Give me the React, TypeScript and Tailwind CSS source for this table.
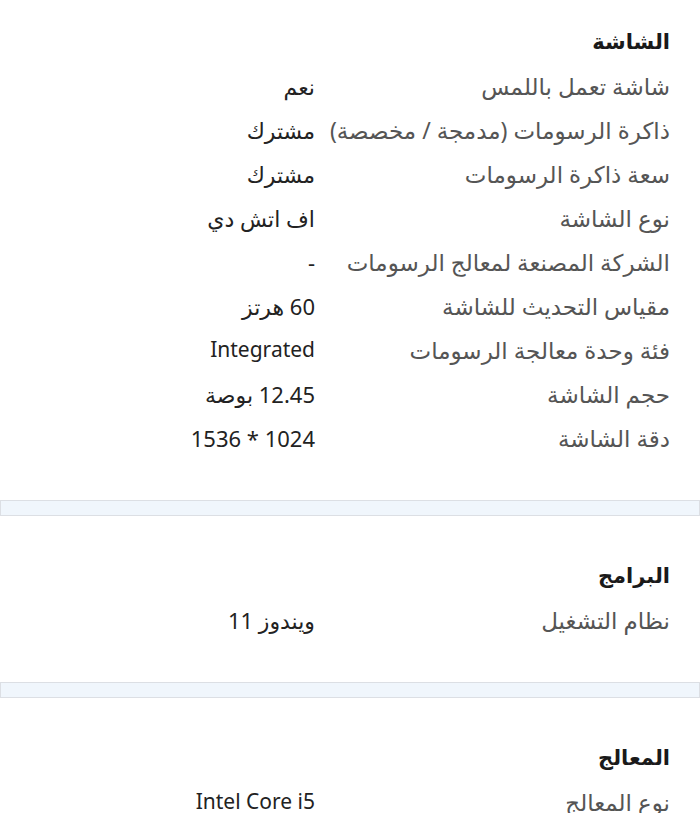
const sections = [
  {
    title: "الشاشة",
    rows: [
      ["شاشة تعمل باللمس", "نعم"],
      ["ذاكرة الرسومات (مدمجة / مخصصة)", "مشترك"],
      ["سعة ذاكرة الرسومات", "مشترك"],
      ["نوع الشاشة", "اف اتش دي"],
      ["الشركة المصنعة لمعالج الرسومات", "-"],
      ["مقياس التحديث للشاشة", "60 هرتز"],
      ["فئة وحدة معالجة الرسومات", "Integrated"],
      ["حجم الشاشة", "12.45 بوصة"],
      ["دقة الشاشة", "1024 * 1536"],
    ],
  },
  {
    title: "البرامج",
    rows: [["نظام التشغيل", "ويندوز 11"]],
  },
  {
    title: "المعالج",
    rows: [["نوع المعالج", "Intel Core i5"]],
  },
]

// latin-only values render a bit smaller than the arabic ones
const isLatin = (s: string) => /^[A-Za-z0-9 ]+$/.test(s) && /[A-Za-z]/.test(s)

function Separator() {
  return <div className="h-4 w-full border border-[#dcdfe4] bg-[#f0f6fc]" />
}

export default function App() {
  return (
    <div
      dir="rtl"
      className="h-[813px] w-[700px] overflow-hidden bg-white"
      style={{ fontFamily: '"Noto Sans", "DejaVu Sans", sans-serif' }}
    >
      {sections.map((section, i) => (
        <div key={section.title}>
          {i > 0 && <Separator />}
          <section className={`${i === 0 ? "pt-5" : "pt-[38px]"} pb-10 pr-[30px]`}>
            <h2 className="flex h-11 items-center text-[21px] font-bold text-[#1a1a1a]">
              {section.title}
            </h2>
            {section.rows.map(([label, value]) => (
              <div key={label} className="flex h-11 items-center">
                <div className="w-[355px] shrink-0 text-[23px] text-[#555]">{label}</div>
                <div className={`${isLatin(value) ? "text-[21px]" : "text-[22px]"} text-[#222]`}>
                  {value}
                </div>
              </div>
            ))}
          </section>
        </div>
      ))}
    </div>
  )
}
